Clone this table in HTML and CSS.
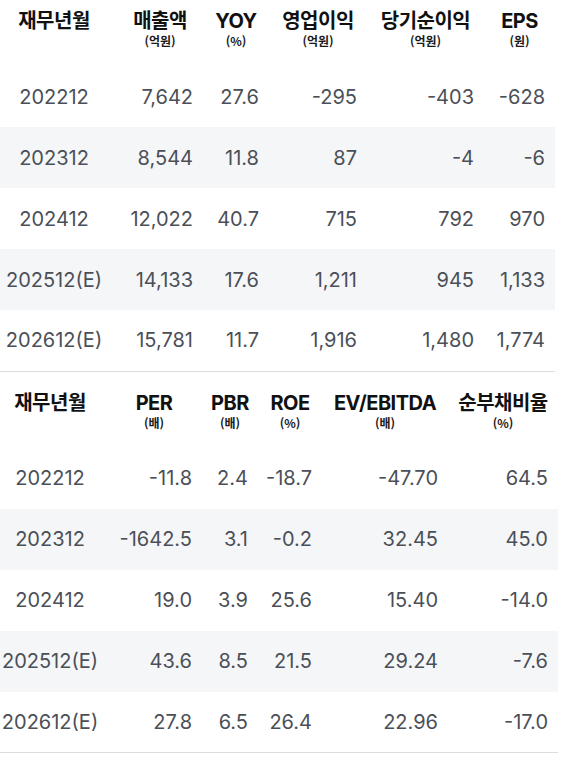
FILE: index.html
```html
<!DOCTYPE html>
<html lang="ko">
<head>
<meta charset="utf-8">
<link rel="stylesheet" href="styles.css">
</head>
<body>
<table class="fin t1">
  <colgroup>
    <col class="a1"><col class="a2"><col class="a3"><col class="a4"><col class="a5"><col class="a6">
  </colgroup>
  <thead>
    <tr>
      <th class="first"><div class="ttl">재무년월</div></th>
      <th><div class="ttl">매출액</div><div class="sub">(억원)</div></th>
      <th><div class="ttl">YOY</div><div class="sub">(%)</div></th>
      <th><div class="ttl">영업이익</div><div class="sub">(억원)</div></th>
      <th><div class="ttl">당기순이익</div><div class="sub">(억원)</div></th>
      <th><div class="ttl">EPS</div><div class="sub">(원)</div></th>
    </tr>
  </thead>
  <tbody>
    <tr><td class="first">202212</td><td>7,642</td><td>27.6</td><td>-295</td><td>-403</td><td>-628</td></tr>
    <tr class="alt"><td class="first">202312</td><td>8,544</td><td>11.8</td><td>87</td><td>-4</td><td>-6</td></tr>
    <tr><td class="first">202412</td><td>12,022</td><td>40.7</td><td>715</td><td>792</td><td>970</td></tr>
    <tr class="alt"><td class="first">202512(E)</td><td>14,133</td><td>17.6</td><td>1,211</td><td>945</td><td>1,133</td></tr>
    <tr><td class="first">202612(E)</td><td>15,781</td><td>11.7</td><td>1,916</td><td>1,480</td><td>1,774</td></tr>
  </tbody>
</table>
<table class="fin t2">
  <colgroup>
    <col class="b1"><col class="b2"><col class="b3"><col class="b4"><col class="b5"><col class="b6">
  </colgroup>
  <thead>
    <tr>
      <th class="first"><div class="ttl">재무년월</div></th>
      <th><div class="ttl">PER</div><div class="sub">(배)</div></th>
      <th><div class="ttl">PBR</div><div class="sub">(배)</div></th>
      <th><div class="ttl">ROE</div><div class="sub">(%)</div></th>
      <th><div class="ttl">EV/EBITDA</div><div class="sub">(배)</div></th>
      <th><div class="ttl">순부채비율</div><div class="sub">(%)</div></th>
    </tr>
  </thead>
  <tbody>
    <tr><td class="first">202212</td><td>-11.8</td><td>2.4</td><td>-18.7</td><td>-47.70</td><td>64.5</td></tr>
    <tr class="alt"><td class="first">202312</td><td>-1642.5</td><td>3.1</td><td>-0.2</td><td>32.45</td><td>45.0</td></tr>
    <tr><td class="first">202412</td><td>19.0</td><td>3.9</td><td>25.6</td><td>15.40</td><td>-14.0</td></tr>
    <tr class="alt"><td class="first">202512(E)</td><td>43.6</td><td>8.5</td><td>21.5</td><td>29.24</td><td>-7.6</td></tr>
    <tr><td class="first">202612(E)</td><td>27.8</td><td>6.5</td><td>26.4</td><td>22.96</td><td>-17.0</td></tr>
  </tbody>
</table>
</body>
</html>
```
FILE: styles.css
```css
html, body {
  margin: 0;
  padding: 0;
  background: #ffffff;
}
body {
  font-family: Inter, "Noto Sans CJK KR", sans-serif;
}
.fin {
  border-collapse: collapse;
  table-layout: fixed;
  border-bottom: 1px solid #dcdcdc;
}
.t1 { width: 555px; }
.t2 { width: 558px; margin-top: 10px; }

.a1 { width: 117px; }
.a2 { width: 86px; }
.a3 { width: 66px; }
.a4 { width: 98px; }
.a5 { width: 117px; }
.a6 { width: 71px; }

.b1 { width: 106px; }
.b2 { width: 96px; }
.b3 { width: 56px; }
.b4 { width: 64px; }
.b5 { width: 126px; }
.b6 { width: 110px; }

.fin th {
  height: 66px;
  box-sizing: border-box;
  padding: 10px 0 18px;
  vertical-align: top;
  text-align: center;
  color: #111111;
  white-space: nowrap;
}
.t1 th.first { padding-right: 9px; }
.t2 th.first { padding-right: 6px; }
.ttl {
  font-family: Inter, "Noto Sans CJK KR", sans-serif;
  font-size: 20px;
  font-weight: 700;
  line-height: 22px;
  letter-spacing: -0.5px;
}
.sub {
  margin-top: 2px;
  font-family: "Noto Sans CJK KR", sans-serif;
  font-size: 12px;
  font-weight: 700;
  line-height: 14px;
  color: #1a1a1a;
}
.fin td {
  height: 61px;
  box-sizing: border-box;
  padding: 0 10px 0 0;
  text-align: right;
  vertical-align: middle;
  font-size: 20px;
  color: #4b4f57;
  white-space: nowrap;
}
.fin td.first {
  text-align: center;
  padding: 0;
}
.t1 td.first { padding-right: 9px; }
.t2 td.first { padding-right: 6px; }
.fin tr.alt td {
  background: #f5f6f8;
}
```
